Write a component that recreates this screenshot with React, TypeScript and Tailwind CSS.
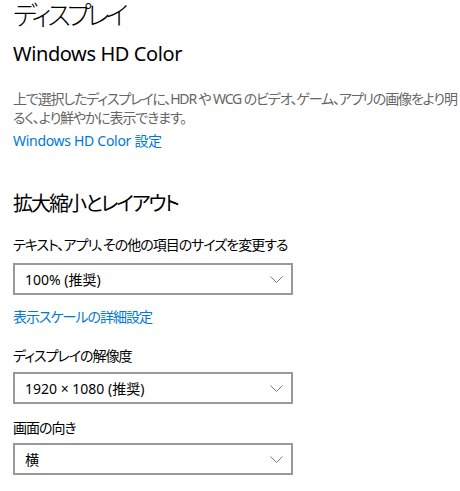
import React from 'react';

const font = { fontFamily: '"Noto Sans", "Noto Sans CJK JP", sans-serif', fontFeatureSettings: '"palt"' };

function Chevron() {
  return (
    <svg width="13" height="7" viewBox="0 0 13 7" fill="none" className="shrink-0">
      <polyline points="0.5,0.5 6.5,6.5 12.5,0.5" stroke="#7a7a7a" strokeWidth="1" />
    </svg>
  );
}

function ComboBox({ value }: { value: string }) {
  return (
    <div className="w-[280px] h-[32px] border-2 border-[#999999] bg-white flex items-center justify-between pl-[10px] pr-[8px]">
      <span className="text-[14px] leading-[19px] text-black">{value}</span>
      <Chevron />
    </div>
  );
}

export default function App() {
  return (
    <div className="w-[460px] h-[491px] bg-white overflow-hidden pl-[13px]" style={font}>
      <h1 className="text-[26px] leading-[30px] font-light tracking-[-4px] text-black">ディスプレイ</h1>

      <h2 className="mt-[10px] text-[20px] leading-[28px] tracking-[-0.4px] text-black">Windows HD Color</h2>
      <p className="mt-[21px] text-[14px] leading-[19px] tracking-[-1.15px] text-[#666666]">
        上で選択したディスプレイに、HDR や WCG のビデオ、ゲーム、アプリの画像をより明
        <br />
        るく、より鮮やかに表示できます。
      </p>
      <div className="mt-[4px] text-[14px] leading-[19px] tracking-[-0.3px] text-[#0078d7]">Windows HD Color 設定</div>

      <h2 className="mt-[40px] text-[20px] leading-[28px] tracking-[-2px] text-black">拡大縮小とレイアウト</h2>
      <div className="mt-[17px] text-[14px] leading-[19px] tracking-[-1px] text-black">テキスト、アプリ、その他の項目のサイズを変更する</div>
      <div className="mt-[9px]">
        <ComboBox value="100% (推奨)" />
      </div>
      <div className="mt-[12px] text-[14px] leading-[19px] tracking-[-1px] text-[#0078d7]">表示スケールの詳細設定</div>

      <div className="mt-[20px] text-[14px] leading-[19px] tracking-[-1px] text-black">ディスプレイの解像度</div>
      <div className="mt-[7px]">
        <ComboBox value="1920 × 1080 (推奨)" />
      </div>

      <div className="mt-[14px] text-[14px] leading-[19px] tracking-[-1px] text-black">画面の向き</div>
      <div className="mt-[6px]">
        <ComboBox value="横" />
      </div>
    </div>
  );
}
